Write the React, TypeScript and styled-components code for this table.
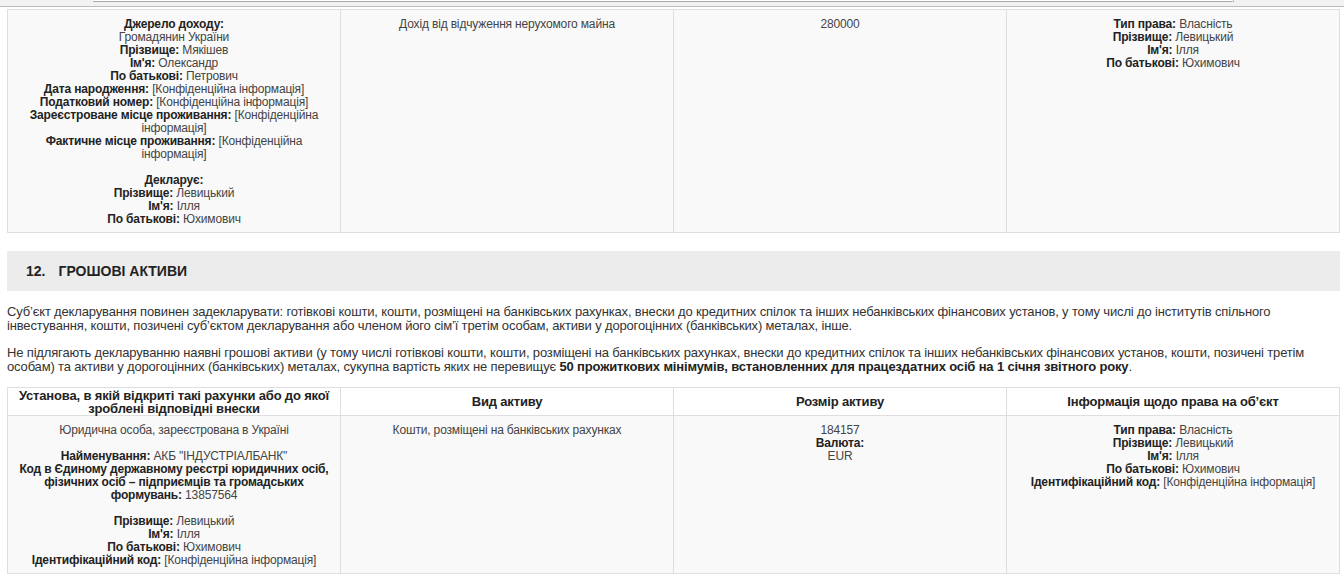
import React from "react";
import styled, { createGlobalStyle } from "styled-components";

const GlobalStyle = createGlobalStyle`
  html, body { margin: 0; padding: 0; background: #fff; }
  body { font-family: "Liberation Sans", Arial, sans-serif; font-size: 12px; color: #333; letter-spacing: -0.16px; }
`;

const Page = styled.div`
  width: 1344px;
`;

const TopBar = styled.div`
  height: 6px;
  background: #f2f2f2;
  border-bottom: 1px solid #bcbcbc;
  padding-left: 93px;
  display: flex;
  align-items: flex-start;
`;

const TopTab = styled.div`
  width: 1140px;
  height: 1px;
  background: #fff;
  border-bottom: 1px solid #a9a9a9;
  border-right: 1px solid #a9a9a9;
  border-bottom-right-radius: 2px;
`;

const Content = styled.div`
  padding: 2px 4px 0 7px;
`;

const Table = styled.table<{ $gap?: number }>`
  width: 1333px;
  border-collapse: collapse;
  table-layout: fixed;
  margin-top: ${(p) => p.$gap ?? 0}px;
`;

const HeadCell = styled.th`
  width: 25%;
  border: 1px solid #dedede;
  background: #fff;
  padding: 0 8px;
  font-size: 13px;
  line-height: 13px;
  font-weight: bold;
  color: #222;
  text-align: center;
  vertical-align: middle;
  height: 27px;
`;

const Cell = styled.td`
  width: 25%;
  border: 1px solid #dedede;
  background: #f9f9f9;
  padding: 8px 8px 6px;
  font-size: 12px;
  line-height: 13px;
  color: #444;
  text-align: center;
  vertical-align: top;
`;

const Line = styled.div``;

const Label = styled.b`
  color: #222;
  font-weight: bold;
`;

const Blank = styled.div`
  height: 13px;
`;

const SectionHeader = styled.div`
  margin-top: 18px;
  height: 40px;
  background: #ececec;
  display: flex;
  align-items: center;
  padding-left: 19px;
  font-size: 14px;
  font-weight: bold;
  color: #222;
  letter-spacing: 0;
`;

const SectionNum = styled.span`
  margin-right: 13px;
`;

const Para = styled.p<{ $top: number }>`
  margin: ${(p) => p.$top}px 0 0 0;
  font-size: 13px;
  line-height: 14px;
  color: #333;
`;

const Strong = styled.b`
  color: #222;
`;

type F = { l?: string; v?: string };

const Field: React.FC<F> = ({ l, v }) => (
  <Line>
    {l && <Label>{l}</Label>}
    {l && v ? " " : null}
    {v}
  </Line>
);

const CONF = "[Конфіденційна інформація]";

export default function App() {
  return (
    <Page>
      <GlobalStyle />
      <TopBar>
        <TopTab />
      </TopBar>
      <Content>
        <Table>
          <tbody>
            <tr>
              <Cell>
                <Field l="Джерело доходу:" />
                <Field v="Громадянин України" />
                <Field l="Прізвище:" v="Мякішев" />
                <Field l="Ім'я:" v="Олександр" />
                <Field l="По батькові:" v="Петрович" />
                <Field l="Дата народження:" v={CONF} />
                <Field l="Податковий номер:" v={CONF} />
                <Field l="Зареєстроване місце проживання:" v={CONF} />
                <Field l="Фактичне місце проживання:" v={CONF} />
                <Blank />
                <Field l="Декларує:" />
                <Field l="Прізвище:" v="Левицький" />
                <Field l="Ім'я:" v="Ілля" />
                <Field l="По батькові:" v="Юхимович" />
              </Cell>
              <Cell>
                <Field v="Дохід від відчуження нерухомого майна" />
              </Cell>
              <Cell>
                <Field v="280000" />
              </Cell>
              <Cell>
                <Field l="Тип права:" v="Власність" />
                <Field l="Прізвище:" v="Левицький" />
                <Field l="Ім'я:" v="Ілля" />
                <Field l="По батькові:" v="Юхимович" />
              </Cell>
            </tr>
          </tbody>
        </Table>

        <SectionHeader>
          <SectionNum>12.</SectionNum>ГРОШОВІ АКТИВИ
        </SectionHeader>

        <Para $top={14}>
          Суб’єкт декларування повинен задекларувати: готівкові кошти, кошти, розміщені на банківських рахунках,
          внески до кредитних спілок та інших небанківських фінансових установ, у тому числі до інститутів спільного
          інвестування, кошти, позичені суб’єктом декларування або членом його сім’ї третім особам, активи у
          дорогоцінних (банківських) металах, інше.
        </Para>
        <Para $top={13}>
          Не підлягають декларуванню наявні грошові активи (у тому числі готівкові кошти, кошти, розміщені на
          банківських рахунках, внески до кредитних спілок та інших небанківських фінансових установ, кошти, позичені
          третім особам) та активи у дорогоцінних (банківських) металах, сукупна вартість яких не перевищує{" "}
          <Strong>
            50 прожиткових мінімумів, встановленних для працездатних осіб на 1 січня звітного року
          </Strong>
          .
        </Para>

        <Table $gap={13}>
          <thead>
            <tr>
              <HeadCell>Установа, в якій відкриті такі рахунки або до якої зроблені відповідні внески</HeadCell>
              <HeadCell>Вид активу</HeadCell>
              <HeadCell>Розмір активу</HeadCell>
              <HeadCell>Інформація щодо права на об’єкт</HeadCell>
            </tr>
          </thead>
          <tbody>
            <tr>
              <Cell>
                <Field v="Юридична особа, зареєстрована в Україні" />
                <Blank />
                <Field l="Найменування:" v={'АКБ "ІНДУСТРІАЛБАНК"'} />
                <Field
                  l="Код в Єдиному державному реєстрі юридичних осіб, фізичних осіб – підприємців та громадських формувань:"
                  v="13857564"
                />
                <Blank />
                <Field l="Прізвище:" v="Левицький" />
                <Field l="Ім'я:" v="Ілля" />
                <Field l="По батькові:" v="Юхимович" />
                <Field l="Ідентифікаційний код:" v={CONF} />
              </Cell>
              <Cell>
                <Field v="Кошти, розміщені на банківських рахунках" />
              </Cell>
              <Cell>
                <Field v="184157" />
                <Field l="Валюта:" />
                <Field v="EUR" />
              </Cell>
              <Cell>
                <Field l="Тип права:" v="Власність" />
                <Field l="Прізвище:" v="Левицький" />
                <Field l="Ім'я:" v="Ілля" />
                <Field l="По батькові:" v="Юхимович" />
                <Field l="Ідентифікаційний код:" v={CONF} />
              </Cell>
            </tr>
          </tbody>
        </Table>
      </Content>
    </Page>
  );
}
